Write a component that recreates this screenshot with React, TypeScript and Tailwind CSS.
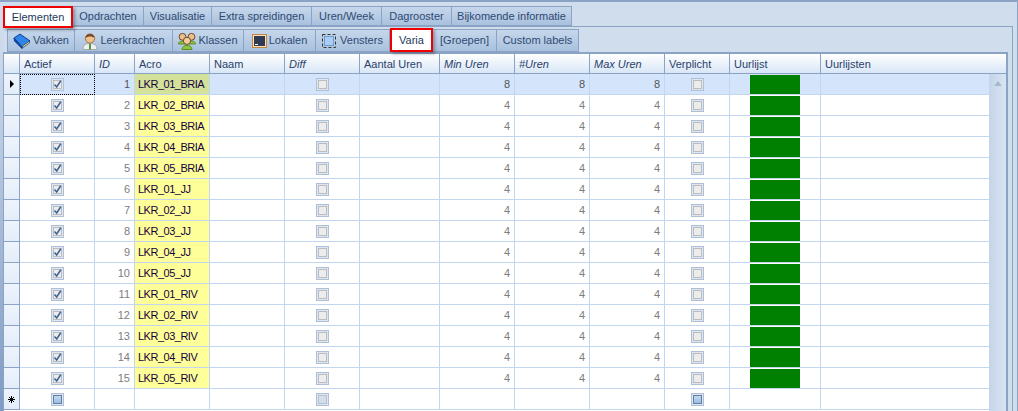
import React from 'react';

const topTabs = ['Opdrachten', 'Visualisatie', 'Extra spreidingen', 'Uren/Week', 'Dagrooster', 'Bijkomende informatie'];
const topWidths = ['w-[71px]', 'w-[68px]', 'w-[100px]', 'w-[70px]', 'w-[70px]', 'w-[120px]'];

const names = ['01_BRIA', '02_BRIA', '03_BRIA', '04_BRIA', '05_BRIA', '01_JJ', '02_JJ', '03_JJ', '04_JJ', '05_JJ', '01_RIV', '02_RIV', '03_RIV', '04_RIV', '05_RIV'];

function BookIcon() {
  return (
    <svg width="18" height="16" viewBox="0 0 18 16">
      <path d="M1 5 L7 1 L17 8 L9 14 Z" fill="#2f86e8" stroke="#103c9a" />
      <path d="M1 5 L9 14 L9 15.5 L1.5 8 Z" fill="#123f9c" stroke="#103c9a" />
      <path d="M9.5 13 L16.5 8 L16.5 10 L9.5 15 Z" fill="#f6dc55" stroke="#103c9a" strokeWidth="0.7" />
    </svg>
  );
}

function PersonIcon() {
  return (
    <svg width="16" height="18" viewBox="0 0 16 18">
      <path d="M1 17.5 C1 12.5 4 11.5 8 11.5 C12 11.5 15 12.5 15 17.5 Z" fill="#eef0f2" stroke="#a8a8a8" />
      <rect x="7" y="12" width="2" height="5.5" fill="#4f9a3c" />
      <circle cx="8" cy="6.5" r="4.6" fill="#f0c090" stroke="#a5723f" />
      <path d="M3.4 6 C3.6 0.5 12.4 0.5 12.6 6 C10 4 6 4 3.4 6 Z" fill="#6f4a2a" />
    </svg>
  );
}

function GroupIcon() {
  return (
    <svg width="18" height="18" viewBox="0 0 18 18">
      <path d="M0.5 12 C0.5 8 8 8 8 12 Z" fill="#8cc63f" stroke="#5d8c24" />
      <path d="M10 12 C10 8 17.5 8 17.5 12 Z" fill="#8cc63f" stroke="#5d8c24" />
      <circle cx="4.5" cy="4.8" r="3.4" fill="#eec08c" stroke="#6f4a2a" />
      <circle cx="13.5" cy="4.8" r="3.4" fill="#eec08c" stroke="#6f4a2a" />
      <path d="M4 17.5 C4 12 14 12 14 17.5 Z" fill="#8cc63f" stroke="#5d8c24" />
      <circle cx="9" cy="8.8" r="3.6" fill="#f4cd9c" stroke="#6f4a2a" />
    </svg>
  );
}

function RoomIcon() {
  return (
    <svg width="15" height="14" viewBox="0 0 15 14">
      <rect x="0.5" y="0.5" width="14" height="13" fill="#f7e3c2" stroke="#c8843a" />
      <rect x="2" y="2" width="11" height="10" fill="#2f3b52" />
      <rect x="3" y="10" width="3" height="1" fill="#ffffff" />
    </svg>
  );
}

function WindowIcon() {
  return (
    <svg width="14" height="14" viewBox="0 0 14 14">
      <rect x="2.5" y="2.5" width="9" height="9" fill="#a9cdf5" stroke="#6f9ad0" />
      <rect x="0.5" y="0.5" width="13" height="13" fill="none" stroke="#333333" strokeDasharray="3 2" />
    </svg>
  );
}

const subTabs = [
  { label: 'Vakken', icon: <BookIcon />, w: 'w-[68px] border-l' },
  { label: 'Leerkrachten', icon: <PersonIcon />, w: 'w-[98px] border-l-0' },
  { label: 'Klassen', icon: <GroupIcon />, w: 'w-[71px] border-l-0' },
  { label: 'Lokalen', icon: <RoomIcon />, w: 'w-[72px] border-l-0' },
  { label: 'Vensters', icon: <WindowIcon />, w: 'w-[74px] border-l-0 gap-[4px]' },
];

type CheckKind = 'checked' | 'empty' | 'fresh' | 'freshOff';

function Check({ kind }: { kind: CheckKind }) {
  const inner = {
    checked: 'border-[#bcbcbc] bg-[#ececec]',
    empty: 'border-[#bcbcbc] bg-[#ececec]',
    fresh: 'border-[#5f7fa8] bg-gradient-to-b from-[#c3d8f0] to-[#9dbde2]',
    freshOff: 'border-[#b4c2d2] bg-[#d3deea]',
  }[kind];
  return (
    <div className="w-[13px] h-[13px] border border-[#aebfd6] bg-[#dde6f2] p-px">
      <div className={`w-full h-full border relative ${inner}`}>
        {kind === 'checked' && (
          <svg className="absolute -left-px -top-px" width="9" height="9" viewBox="0 0 9 9">
            <path d="M1.5 4.5 L3.7 7 L7.8 0.8" fill="none" stroke="#3f6596" strokeWidth="1.6" />
          </svg>
        )}
      </div>
    </div>
  );
}

const cols = [
  { label: 'Actief', w: 'w-[75px]' },
  { label: 'ID', w: 'w-[40px]', italic: true },
  { label: 'Acro', w: 'w-[75px]' },
  { label: 'Naam', w: 'w-[75px]' },
  { label: 'Diff', w: 'w-[75px]', italic: true },
  { label: 'Aantal Uren', w: 'w-[80px]' },
  { label: 'Min Uren', w: 'w-[75px]', italic: true },
  { label: '#Uren', w: 'w-[75px]', italic: true },
  { label: 'Max Uren', w: 'w-[75px]', italic: true },
  { label: 'Verplicht', w: 'w-[65px]' },
  { label: 'Uurlijst', w: 'w-[91px]' },
  { label: 'Uurlijsten', w: 'flex-1' },
];

const cell = 'h-full shrink-0 border-r border-b border-[#c3d6f0] flex items-center';
const rowHead = 'h-full w-[16px] shrink-0 flex items-center justify-center border-r border-b border-[#8ba3c4] bg-gradient-to-b from-[#eef4fc] to-[#e3edf9]';
const tabBg = 'bg-gradient-to-b from-[#c6d7eb] to-[#a9c1de] text-[#2f4a72]';

function Row({ index, name }: { index: number; name: string }) {
  const selected = index === 1;
  const uren = selected ? 8 : 4;
  const num = selected ? 'text-[#555555]' : 'text-[#7d7d7d]';
  return (
    <div className={`h-[21px] flex ${selected ? 'bg-[#d4e5fb]' : 'bg-white'}`}>
      <div className={rowHead}>
        {selected && <div className="w-0 h-0 border-y-[4px] border-y-transparent border-l-[4px] border-l-black" />}
      </div>
      <div className={`${cell} w-[75px] justify-center ${selected ? 'outline-1 -outline-offset-1 outline-dotted outline-black' : ''}`}>
        <Check kind="checked" />
      </div>
      <div className={`${cell} w-[40px] justify-end pr-[4px] ${num}`}>{index}</div>
      <div className={`${cell} w-[75px] pl-[3px] tracking-[-0.5px] text-[#14003c] ${selected ? 'bg-[#d3e19a]' : 'bg-[#ffff99]'}`}>LKR_{name}</div>
      <div className={`${cell} w-[75px]`} />
      <div className={`${cell} w-[75px] justify-center`}>
        <Check kind="empty" />
      </div>
      <div className={`${cell} w-[80px]`} />
      <div className={`${cell} w-[75px] justify-end pr-[4px] ${num}`}>{uren}</div>
      <div className={`${cell} w-[75px] justify-end pr-[4px] ${num}`}>{uren}</div>
      <div className={`${cell} w-[75px] justify-end pr-[4px] ${num}`}>{uren}</div>
      <div className={`${cell} w-[65px] justify-center`}>
        <Check kind="empty" />
      </div>
      <div className={`${cell} w-[91px] justify-center`}>
        <div className="w-[50px] h-[19px] bg-[#008000]" />
      </div>
      <div className="flex-1 border-b border-[#c3d6f0]" />
    </div>
  );
}

function NewRow() {
  return (
    <div className="h-[21px] flex bg-white">
      <div className={rowHead}>
        <svg width="7" height="7" viewBox="0 0 7 7" stroke="#000000" strokeWidth="1">
          <path d="M3.5 0 V7 M0 3.5 H7 M1 1 L6 6 M6 1 L1 6" />
        </svg>
      </div>
      <div className={`${cell} w-[75px] justify-center`}>
        <Check kind="fresh" />
      </div>
      <div className={`${cell} w-[40px]`} />
      <div className={`${cell} w-[75px]`} />
      <div className={`${cell} w-[75px]`} />
      <div className={`${cell} w-[75px] justify-center`}>
        <Check kind="freshOff" />
      </div>
      <div className={`${cell} w-[80px]`} />
      <div className={`${cell} w-[75px]`} />
      <div className={`${cell} w-[75px]`} />
      <div className={`${cell} w-[75px]`} />
      <div className={`${cell} w-[65px] justify-center`}>
        <Check kind="fresh" />
      </div>
      <div className={`${cell} w-[91px]`} />
      <div className="flex-1 border-b border-[#c3d6f0]" />
    </div>
  );
}

export default function App() {
  return (
    <div className="w-[1018px] h-[411px] overflow-hidden bg-[#d0dded] border-t-2 border-r border-t-[#8ba3c4] border-r-[#8ba3c4] text-[11px] font-['Liberation_Sans',sans-serif]">
      <div className="flex pl-[3px] pt-[3px] h-[24px]">
        <div className="w-[70px] h-[22px] mt-px flex items-center justify-center bg-white text-[#1e395b] border-2 border-[#ee0000] shadow-[2px_2px_3px_rgba(0,0,0,0.3)] relative">
          Elementen
        </div>
        <div className="flex mt-[1px] h-[20px]">
          {topTabs.map((t, i) => (
            <div key={t} className={`${topWidths[i]} flex items-center justify-center border border-l-0 border-[#8ba3c4] ${tabBg}`}>
              {t}
            </div>
          ))}
        </div>
      </div>
      <div className="flex h-[385px] mr-[4px]">
        <div className="w-[3px] shrink-0 bg-gradient-to-b from-[#d0dded] via-[#a9bdd8] to-[#7f9bc2]" />
        <div className="flex-1 min-w-0 border-r border-t border-[#8ba3c4] flex flex-col">
          <div className="flex pl-[4px] pt-[2px] h-[25px] shrink-0">
            {subTabs.map((t) => (
              <div key={t.label} className={`${t.w} h-[23px] flex items-center justify-center gap-[2px] border-y border-r border-[#8ba3c4] ${tabBg}`}>
                {t.icon}
                {t.label}
              </div>
            ))}
            <div className="w-[43px] h-[24px] -mt-px flex items-center justify-center bg-white text-[#1e395b] border-2 border-[#ee0000] shadow-[2px_2px_3px_rgba(0,0,0,0.3)] relative">Varia</div>
            <div className={`w-[64px] h-[23px] flex items-center justify-center border border-l-0 border-[#8ba3c4] ${tabBg}`}>[Groepen]</div>
            <div className={`w-[82px] h-[23px] flex items-center justify-center border border-l-0 border-[#8ba3c4] ${tabBg}`}>Custom labels</div>
          </div>
          <div className="mr-[4px] flex-1 flex flex-col border-t-2 border-l border-r-2 border-[#8ba3c4] bg-white">
            <div className="h-[20px] shrink-0 flex border-b border-[#8ba3c4] bg-gradient-to-b from-[#ffffff] to-[#d8e6f6] text-[#2a3f6b]">
              <div className="w-[16px] border-r border-[#8ba3c4]" />
              {cols.map((c) => (
                <div key={c.label} className={`${c.w} shrink-0 flex items-center pl-[4px] pt-px border-r border-[#8ba3c4] last:border-r-0 ${c.italic ? 'italic' : ''}`}>
                  {c.label}
                </div>
              ))}
            </div>
            <div className="flex flex-1 min-h-0">
              <div className="flex-1">
                {names.map((n, i) => (
                  <Row key={n} index={i + 1} name={n} />
                ))}
                <NewRow />
              </div>
              <div className="w-[17px] shrink-0 flex justify-center pt-[7px] bg-gradient-to-r from-[#c4d5e9] to-[#d8e4f2]">
                <div className="w-0 h-0 border-x-[4.5px] border-x-transparent border-b-[5px] border-b-[#a8b8cc]" />
              </div>
            </div>
          </div>
        </div>
      </div>
    </div>
  );
}
